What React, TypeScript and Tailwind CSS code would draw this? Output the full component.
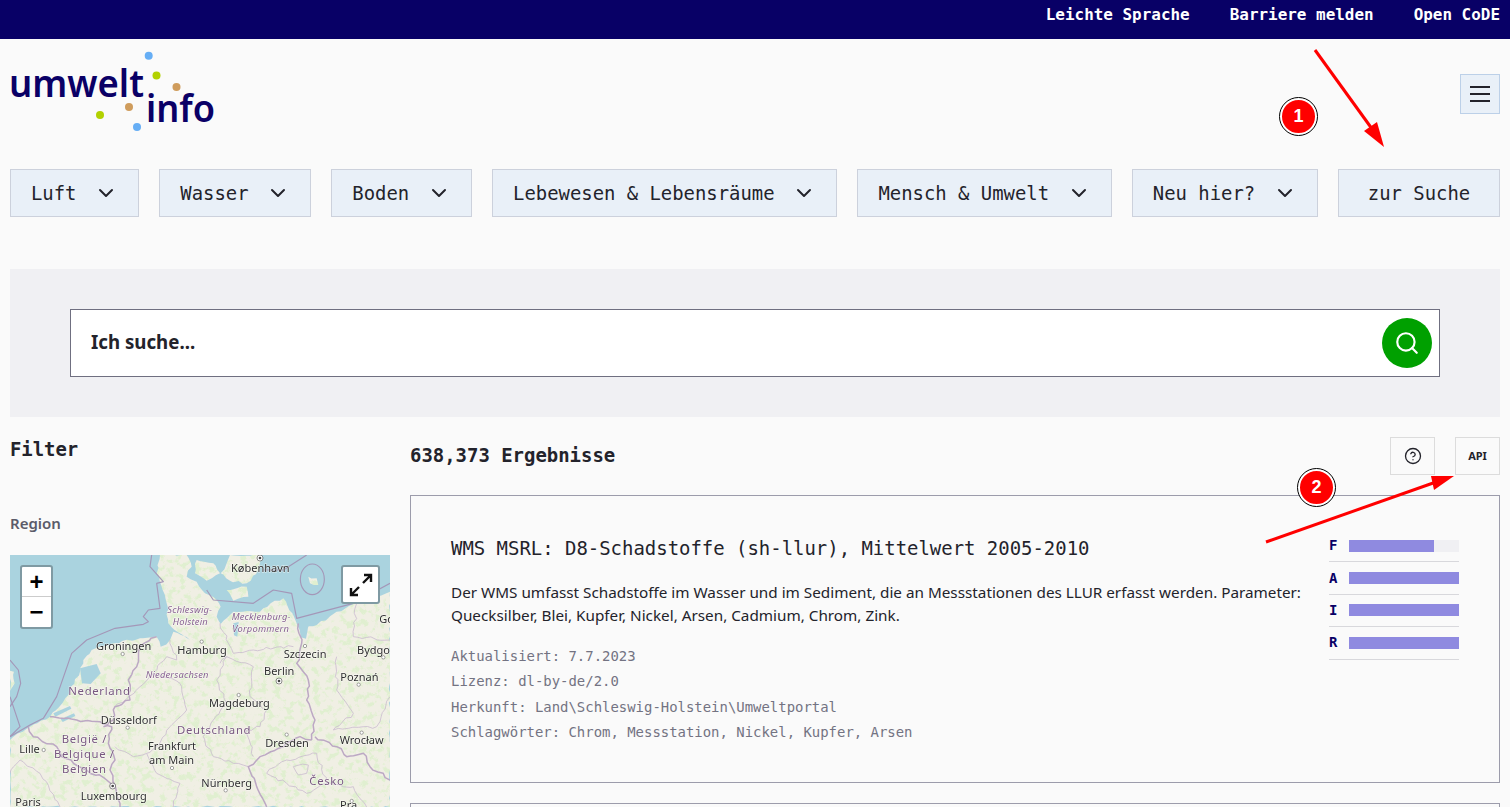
import { ChevronDown, Search, CircleHelp } from "lucide-react"

const mono = "font-['DejaVu_Sans_Mono','Liberation_Mono',monospace]"
const sans = "font-['Noto_Sans','Liberation_Sans',sans-serif]"

const navItems = ["Luft", "Wasser", "Boden", "Lebewesen & Lebensräume", "Mensch & Umwelt", "Neu hier?"]

const fair = [
  { letter: "F", value: 77 },
  { letter: "A", value: 100 },
  { letter: "I", value: 100 },
  { letter: "R", value: 100 },
]

const metaLines = [
  "Aktualisiert: 7.7.2023",
  "Lizenz: dl-by-de/2.0",
  "Herkunft: Land\\Schleswig-Holstein\\Umweltportal",
  "Schlagwörter: Chrom, Messstation, Nickel, Kupfer, Arsen",
]

// small fixed generator, so that the map looks the same on every run
function makeRandom(seed: number) {
  let s = seed
  return () => {
    s = (s * 16807) % 2147483647
    return s / 2147483647 - 0.5
  }
}

// turns a straight polyline into a hand-drawn looking border
function wiggle(d: string, amount: number, seed: number) {
  const rnd = makeRandom(seed)
  const pts = [...d.matchAll(/(-?\d+),(-?\d+)/g)].map((m) => [Number(m[1]), Number(m[2])])
  const closed = d.trim().endsWith("Z")
  if (closed) pts.push(pts[0])
  let out = `M${pts[0][0]},${pts[0][1]}`
  for (let i = 1; i < pts.length; i++) {
    const [ax, ay] = pts[i - 1]
    const [bx, by] = pts[i]
    const steps = Math.max(1, Math.round(Math.hypot(bx - ax, by - ay) / 14))
    for (let k = 1; k < steps; k++) {
      const x = ax + ((bx - ax) * k) / steps + rnd() * amount
      const y = ay + ((by - ay) * k) / steps + rnd() * amount
      out += ` L${x.toFixed(1)},${y.toFixed(1)}`
    }
    out += ` L${bx},${by}`
  }
  return closed ? `${out} Z` : out
}

// map coordinates are 3x screen pixels, viewBox starts at the map's corner
const mainland =
  "M30,600 L90,560 L150,530 L178,500 L205,465 L240,395 L250,360 L275,330 L300,320 L340,310 L420,295 L470,290 L482,320 L510,300 L520,275 L570,300 L515,262 L505,250 L500,190 L488,150 L470,100 L480,45 L560,45 L575,80 L560,110 L590,125 L615,160 L650,180 L662,200 L650,230 L662,252 L690,225 L700,215 L780,215 L812,190 L850,175 L882,230 L900,270 L950,255 L1000,222 L1060,192 L1130,170 L1170,155 L1170,801 L30,801 Z"
const islands = [
  "M590,60 L640,70 L660,100 L620,122 L585,100 Z",
  "M690,45 L780,45 L775,90 L740,130 L690,122 L662,100 L680,70 Z",
  "M680,150 L740,140 L745,170 L700,182 Z",
  "M925,110 L950,115 L955,135 L930,130 Z",
  "M30,392 L42,395 L44,430 L30,452 Z",
]
const innerWater = [
  "M240,385 L290,372 L302,400 L272,432 L246,430 Z",
  "M160,520 L210,498 L214,506 L166,530 Z",
  "M182,538 L222,520 L226,528 L188,546 Z",
  "M700,250 L716,246 L712,290 L702,286 Z",
  "M898,262 L925,258 L918,296 L902,292 Z",
]

const countryBorders = [
  "M470,290 L420,320 L410,380 L385,420 L390,480 L345,500 L340,540 L310,560",
  "M150,530 L230,540 L300,545 L335,560 L325,610 L345,660 L330,690 L345,735 L360,801",
  "M85,560 L100,590 L170,620 L185,650 L260,690 L320,720 L345,735",
  "M895,250 L905,310 L890,370 L925,420 L920,480 L945,540 L935,600",
  "M935,600 L900,590 L850,620 L780,650 L745,680 L770,740 L800,801",
  "M945,590 L1010,620 L1040,650 L1090,640 L1110,680 L1170,720",
]
const stateBorders = [
  "M510,300 L530,360 L500,350 L460,400 L540,430 L560,510 L510,560 L470,620 L440,640 L470,700 L540,730 L520,801",
  "M660,370 L680,350 L760,380 L750,470 L800,510 L780,560 L740,570 L760,650",
  "M680,350 L650,420 L680,490 L640,540 L610,590 L640,650 L700,670 L745,680",
  "M660,250 L700,340 L760,330 L880,320",
  "M1010,350 L1010,450 L1060,520 L1000,570 L1130,560 L1170,470",
  "M1070,190 L1060,290 L1170,300",
  "M800,700 L860,660 L950,640 L980,730 L920,760 L860,730 Z",
  "M980,730 L1060,740 L1100,801",
  "M880,680 L925,675 L920,700 L895,705 Z",
  "M30,700 L60,660 L120,700 L180,801",
  "M345,500 L420,440 L460,400",
  "M345,620 L400,650 L440,640",
]
const seaBorders = [
  "M30,590 L90,555 L130,535 L170,470 L215,340 L260,300 L345,265 L430,253 L445,245 L430,230 L445,210 L480,205 L470,130 L490,125 L450,80 L455,45",
  "M620,150 L640,180 L760,190 L820,150 L875,160 L890,235 L1060,190 L1170,130",
  "M790,90 L850,90 L920,45",
  "M30,360 L55,390 L62,430 L50,470 L30,500",
  "M30,470 L60,560 L30,590",
]

type Label = { t: string; x: number; y: number; kind?: "region" | "country" }
const labels: Label[] = [
  { t: "København", x: 693, y: 97 },
  { t: "Schleswig-", x: 502, y: 218, kind: "region" },
  { t: "Holstein", x: 518, y: 254, kind: "region" },
  { t: "Mecklenburg-", x: 695, y: 241, kind: "region" },
  { t: "Vorpommern", x: 697, y: 277, kind: "region" },
  { t: "Groningen", x: 288, y: 330 },
  { t: "Hamburg", x: 532, y: 342 },
  { t: "Szczecin", x: 851, y: 355 },
  { t: "Bydgo", x: 1071, y: 342 },
  { t: "Go", x: 1138, y: 250 },
  { t: "Berlin", x: 792, y: 404 },
  { t: "Poznań", x: 1021, y: 422 },
  { t: "Niedersachsen", x: 437, y: 414, kind: "region" },
  { t: "Nederland", x: 205, y: 465, kind: "country" },
  { t: "Magdeburg", x: 627, y: 502 },
  { t: "Düsseldorf", x: 302, y: 552 },
  { t: "Deutschland", x: 531, y: 582, kind: "country" },
  { t: "Dresden", x: 796, y: 620 },
  { t: "Wrocław", x: 1019, y: 611 },
  { t: "Lille", x: 58, y: 640 },
  { t: "België /", x: 185, y: 610, kind: "country" },
  { t: "Belgique /", x: 162, y: 654, kind: "country" },
  { t: "Belgien", x: 186, y: 698, kind: "country" },
  { t: "Frankfurt", x: 444, y: 631 },
  { t: "am Main", x: 447, y: 672 },
  { t: "Nürnberg", x: 604, y: 742 },
  { t: "Česko", x: 928, y: 734, kind: "country" },
  { t: "Luxembourg", x: 242, y: 781 },
  { t: "Paris", x: 46, y: 797 },
  { t: "Pra", x: 1020, y: 807 },
]
const cityDots = [
  [605, 305], [368, 342], [915, 318], [1150, 352], [1076, 434], [716, 465], [383, 563],
  [860, 584], [1085, 578], [131, 630], [516, 684], [677, 751], [1055, 783],
]
const capitals = [
  [780, 54], [837, 423], [338, 738],
]

function MapDrawing() {
  const land = [mainland, ...islands].map((d, i) => wiggle(d, 7, 11 + i)).join(" ")
  return (
    <svg viewBox="30 45 1140 756" className="block w-[380px] h-[252px] blur-[0.3px]">
      <defs>
        <filter id="woods" x="0" y="0" width="100%" height="100%">
          <feTurbulence type="fractalNoise" baseFrequency="0.05" numOctaves="5" seed="7" />
          <feColorMatrix values="0 0 0 0 0.74  0 0 0 0 0.87  0 0 0 0 0.62  7 0 0 0 -3.55" />
        </filter>
      </defs>
      <rect x="30" y="45" width="1140" height="756" fill="#f0efe4" />
      <rect x="30" y="45" width="1140" height="756" filter="url(#woods)" opacity="0.9" />
      <path fillRule="evenodd" fill="#aad3df" d={`M30,45 H1170 V801 H30 Z ${land}`} />
      {innerWater.map((d) => (
        <path key={d} d={d} fill="#aad3df" />
      ))}
      {stateBorders.map((d, i) => (
        <path key={d} d={wiggle(d, 9, 40 + i)} fill="none" stroke="#cbbdd0" strokeWidth="2.5" strokeLinejoin="round" />
      ))}
      {countryBorders.map((d, i) => (
        <path key={d} d={wiggle(d, 9, 70 + i)} fill="none" stroke="#bca8c4" strokeWidth="4.5" strokeLinejoin="round" />
      ))}
      {seaBorders.map((d) => (
        <path key={d} d={d} fill="none" stroke="#a497b8" strokeWidth="3.5" strokeLinejoin="round" />
      ))}
      <ellipse cx="937" cy="118" rx="36" ry="46" fill="none" stroke="#a497b8" strokeWidth="3.5" />
      {cityDots.map(([x, y]) => (
        <circle key={`${x}-${y}`} cx={x} cy={y} r="5" fill="#fff" stroke="#777" strokeWidth="2" />
      ))}
      {capitals.map(([x, y]) => (
        <g key={`${x}-${y}`}>
          <circle cx={x} cy={y} r="9" fill="#fff" stroke="#555" strokeWidth="2" />
          <circle cx={x} cy={y} r="4" fill="#444" />
        </g>
      ))}
      <g style={{ paintOrder: "stroke" }} stroke="#ffffffb0" strokeWidth="3" className="font-['Noto_Sans',sans-serif]">
        {labels.map((l) => {
          if (l.kind === "region")
            return (
              <text key={l.t} x={l.x} y={l.y} fontSize="28" fontStyle="italic" fill="#86608f" letterSpacing="0.6">
                {l.t}
              </text>
            )
          if (l.kind === "country")
            return (
              <text key={l.t} x={l.x} y={l.y} fontSize="34" fill="#77577f" letterSpacing="2">
                {l.t}
              </text>
            )
          return (
            <text key={l.t} x={l.x} y={l.y} fontSize="33" fill="#2f2f2f">
              {l.t}
            </text>
          )
        })}
      </g>
    </svg>
  )
}

function Logo() {
  return (
    <svg width="210" height="84" viewBox="0 0 210 84" className="block">
      <g className="font-['Noto_Sans',sans-serif]" fill="#0a0066" fontWeight="600" fontSize="37">
        <text x="-1" y="47" textLength="135" lengthAdjust="spacingAndGlyphs">umwelt</text>
        <text x="136" y="72" textLength="69" lengthAdjust="spacingAndGlyphs">info</text>
      </g>
      <circle cx="138.7" cy="5.7" r="4" fill="#66aef5" />
      <circle cx="146.5" cy="25.5" r="4" fill="#b2d100" />
      <circle cx="166.5" cy="37" r="4" fill="#cf9c5c" />
      <circle cx="119" cy="57" r="4" fill="#cf9c5c" />
      <circle cx="90" cy="65" r="4" fill="#b2d100" />
      <circle cx="127" cy="77" r="4" fill="#66aef5" />
    </svg>
  )
}

function Badge({ n, className }: { n: string; className: string }) {
  return (
    <div
      className={`absolute w-[37px] h-[37px] rounded-full bg-[#ff0000] border-2 border-white outline outline-1 outline-black flex items-center justify-center text-white text-[18px] font-bold font-['Liberation_Sans',sans-serif] ${className}`}
    >
      {n}
    </div>
  )
}

export default function App() {
  return (
    <div className={`relative h-[807px] overflow-hidden bg-[#fafafa] text-[#23232b] ${mono}`}>
      <div className="h-[39px] bg-[#080066] flex items-start justify-end gap-10 pr-[10px] pt-[3px] text-white text-[15.95px] font-semibold leading-6">
        <span>Leichte Sprache</span>
        <span>Barriere melden</span>
        <span>Open CoDE</span>
      </div>

      <header className="h-[130px] flex justify-between px-[10px]">
        <div className="pt-[11px]">
          <Logo />
        </div>
        <button className="mt-[35px] w-10 h-10 bg-[#e9f0f8] border border-[#bcd0e8] flex flex-col items-center justify-center gap-[5px]">
          <span className="block w-5 h-[2px] bg-[#23232b]" />
          <span className="block w-5 h-[2px] bg-[#23232b]" />
          <span className="block w-5 h-[2px] bg-[#23232b]" />
        </button>
      </header>

      <nav className="flex justify-between px-[10px] text-[18.9px]">
        {navItems.map((item) => (
          <button
            key={item}
            className="h-12 px-5 bg-[#e9f0f8] border border-[#ccd1dc] flex items-center gap-[17.5px] whitespace-nowrap"
          >
            {item}
            <ChevronDown size={24} strokeWidth={2} />
          </button>
        ))}
        <button className="h-12 w-[162px] bg-[#e9f0f8] border border-[#ccd1dc] flex items-center justify-center">
          zur Suche
        </button>
      </nav>

      <section className="mt-[52px] mx-[10px] h-[148px] bg-[#f0f0f3] flex items-center px-[60px]">
        <div className="h-[68px] w-full bg-white border border-[#6f6f80] flex items-center justify-between pl-5 pr-[7px]">
          <span className={`text-[18.7px] font-bold leading-6 -mt-[2px] ${sans}`}>Ich suche...</span>
          <span className="w-[50px] h-[50px] rounded-full bg-[#00a000] flex items-center justify-center text-white">
            <Search size={26} strokeWidth={2} />
          </span>
        </div>
      </section>

      <div className="flex gap-5 px-[10px]">
        <aside className="w-[380px] shrink-0">
          <h2 className="mt-[20px] text-[18.9px] font-bold leading-6">Filter</h2>
          <h3 className={`mt-[50px] text-[15px] font-semibold leading-6 text-[#5b5b69] ${sans}`}>Region</h3>
          <div className="relative mt-[20px]">
            <MapDrawing />
            <div className="absolute left-[10px] top-[10px] w-[33px] bg-white border-2 border-[#7f9aa3] rounded-[3px] flex flex-col text-black font-['Liberation_Sans',sans-serif] font-bold text-[24px] leading-none">
              <span className="h-[30px] flex items-center justify-center border-b border-[#ccc]">+</span>
              <span className="h-[30px] flex items-center justify-center">−</span>
            </div>
            <div className="absolute right-[10px] top-[10px] w-[39px] h-[39px] bg-white border-2 border-[#7f9aa3] rounded-[3px] flex items-center justify-center">
              <svg width="24" height="24" viewBox="0 0 24 24" fill="none" stroke="#111" strokeWidth="2.4">
                <path d="M14 10 L22 2 M15 2 H22 V9 M10 14 L2 22 M2 15 V22 H9" />
              </svg>
            </div>
          </div>
        </aside>

        <main className="flex-1 min-w-0">
          <div className="h-[78px] flex justify-between items-start">
            <h1 className="mt-[26px] text-[18.95px] font-bold leading-6">638,373 Ergebnisse</h1>
            <div className="mt-[20px] flex gap-5">
              <span className="w-[45px] h-[38px] border border-[#dcdcdc] flex items-center justify-center">
                <CircleHelp size={18} strokeWidth={1.75} />
              </span>
              <span className={`w-[45px] h-[38px] border border-[#dcdcdc] flex items-center justify-center text-[11px] font-bold ${sans}`}>
                API
              </span>
            </div>
          </div>

          <article className="h-[288px] border border-[#9c9cab] pl-10 pr-10 pt-[41px] flex gap-[28px]">
            <div className="flex-1 min-w-0">
              <h2 className="text-[18.95px] leading-6 whitespace-nowrap -mt-[1px]">
                WMS MSRL: D8-Schadstoffe (sh-llur), Mittelwert 2005-2010
              </h2>
              <p className={`mt-[21px] text-[15.27px] leading-[23px] -mr-[10px] ${sans}`}>
                Der WMS umfasst Schadstoffe im Wasser und im Sediment, die an Messstationen des LLUR erfasst werden. Parameter: Quecksilber, Blei, Kupfer, Nickel, Arsen, Cadmium, Chrom, Zink.
              </p>
              <ul className="mt-[17px] text-[13.95px] leading-[25.3px] text-[#737382]">
                {metaLines.map((line) => (
                  <li key={line}>{line}</li>
                ))}
              </ul>
            </div>
            <div className="w-[130px] shrink-0 -mt-[7px]">
              {fair.map((row) => (
                <div key={row.letter} className="h-[32.4px] flex items-center gap-[14px] border-b border-[#d8d8dc]">
                  <span className="w-[6px] text-[14px] font-bold text-[#080066]">{row.letter}</span>
                  <div className="w-[110px] h-3 bg-[#f0f0f3]">
                    <div className="h-full bg-[#8f8ae0]" style={{ width: `${row.value}%` }} />
                  </div>
                </div>
              ))}
            </div>
          </article>

          <article className="mt-5 h-[200px] border border-[#9c9cab]" />
        </main>
      </div>

      {/* annotations drawn on top of the screenshot */}
      <svg width="1510" height="807" className="absolute left-0 top-0 pointer-events-none">
        <path d="M1315,50 L1375,133" stroke="#ff0000" strokeWidth="3" />
        <path d="M1384,147 L1364,131 L1377,122 Z" fill="#ff0000" />
        <path d="M1266,542 L1436,482" stroke="#ff0000" strokeWidth="3" />
        <path d="M1454,476 L1434,490 L1431,476 Z" fill="#ff0000" />
      </svg>
      <Badge n="1" className="left-[1280px] top-[98px]" />
      <Badge n="2" className="left-[1298px] top-[469px]" />
    </div>
  )
}
